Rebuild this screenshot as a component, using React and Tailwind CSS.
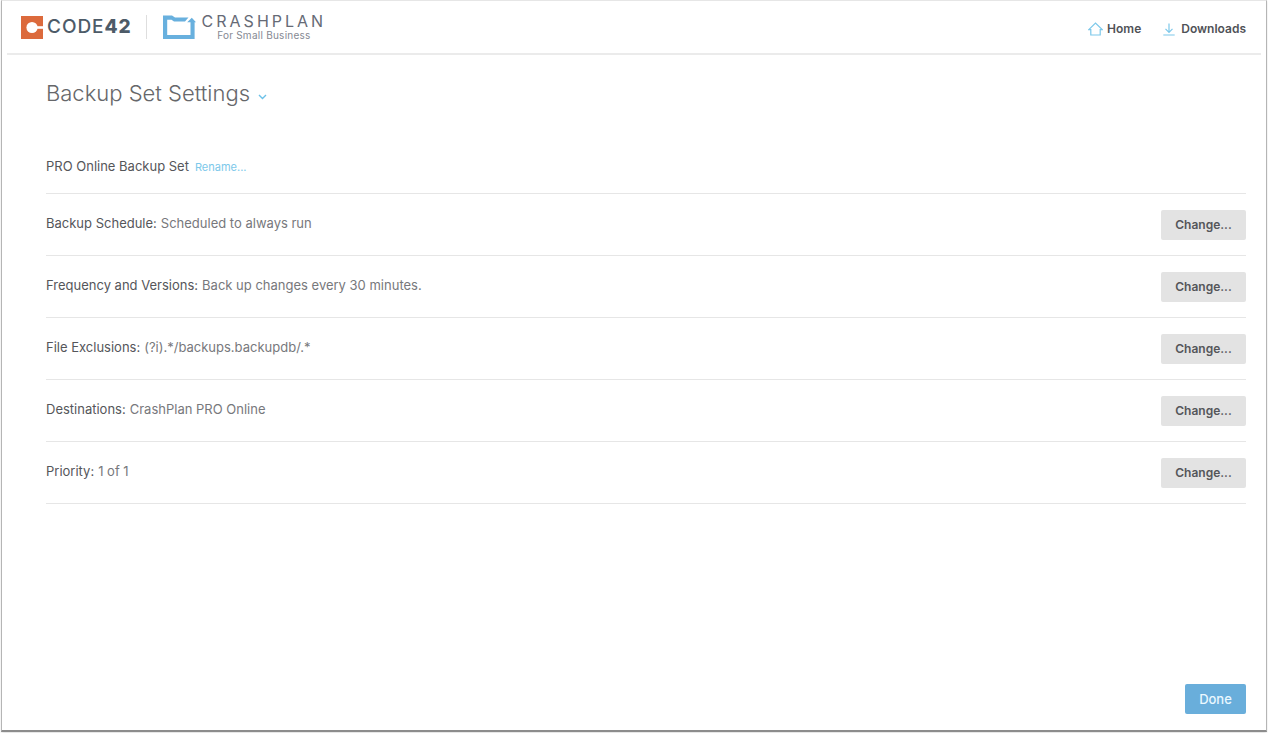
const settings = [
  { label: "Backup Schedule:", value: "Scheduled to always run" },
  { label: "Frequency and Versions:", value: "Back up changes every 30 minutes." },
  { label: "File Exclusions:", value: "(?i).*/backups.backupdb/.*" },
  { label: "Destinations:", value: "CrashPlan PRO Online" },
  { label: "Priority:", value: "1 of 1" },
];

function Code42Logo() {
  return (
    <div className="flex items-center gap-1">
      <svg width="22" height="23" viewBox="0 0 22 23" aria-hidden="true">
        <rect width="22" height="23" fill="#dc6a3c" />
        <circle cx="11" cy="11.5" r="5.6" fill="#fff" />
        <rect x="14" y="10.2" width="8" height="2.6" fill="#fff" />
      </svg>
      <span className="text-[19px] leading-6 font-medium tracking-wider text-[#4d5b68]">
        CODE<span className="font-extrabold">42</span>
      </span>
    </div>
  );
}

function CrashPlanLogo() {
  return (
    <div className="flex items-center gap-1.5">
      <svg width="33" height="25" viewBox="0 0 33 25" fill="#68b0de" aria-hidden="true">
        <path d="M0 0.5H9L12 2.5H25.5L22 6.5H11L8.5 4.8H4.2V20H27.5V7.3H24.2L28.8 2.8L33 7.3H31.6V24H0Z" />
      </svg>
      <div className="flex flex-col items-center">
        <span className="text-[16px] leading-4 tracking-[3px] text-[#666a76]">CRASHPLAN</span>
        <span className="text-[10px] leading-3 tracking-wide text-[#858993]">For Small Business</span>
      </div>
    </div>
  );
}

export default function App() {
  return (
    <div className="flex min-h-screen flex-col bg-white pr-px pb-px pl-px font-['Inter',sans-serif] text-[13px] leading-5 text-[#55565a]">
      <div className="flex grow flex-col border border-t-[#e6e6e6] border-r-[#b5b5b5] border-b-2 border-b-[#8c8c8c] border-l-[#b5b5b5] bg-white shadow-sm">
        <header className="mx-[5px] flex h-[54px] items-center justify-between border-b-2 border-[#ebebeb] pr-[15px] pl-[14px]">
          <div className="flex items-center">
            <Code42Logo />
            <div className="mr-4 ml-3.5 h-6 w-px bg-[#dedede]" />
            <CrashPlanLogo />
          </div>
          <nav className="flex items-center gap-[22px] pt-1 text-xs font-semibold text-[#505257]">
            <a href="#home" className="flex items-center gap-1">
              <svg width="15" height="14" viewBox="0 0 15 14" fill="none" stroke="#7cc8ea" strokeWidth="1.2" aria-hidden="true">
                <path d="M0.8 7.6L7.5 1L14.2 7.6H12.2V13H2.8V7.6Z" />
              </svg>
              Home
            </a>
            <a href="#downloads" className="flex items-center gap-1.5">
              <svg width="12" height="13" viewBox="0 0 12 13" fill="none" stroke="#7cc8ea" strokeWidth="1.2" aria-hidden="true">
                <path d="M6 0.5V9M2.5 5.8L6 9.3L9.5 5.8M0.3 12H11.7" />
              </svg>
              Downloads
            </a>
          </nav>
        </header>

        <main className="flex grow flex-col pr-5 pb-4 pl-11">
          <div className="flex items-center gap-2 pt-[22px]">
            <h1 className="text-[22px] leading-8 font-light text-[#66676a]">Backup Set Settings</h1>
            <button type="button" aria-label="Choose backup set" className="pt-2">
              <svg width="9" height="6" viewBox="0 0 9 6" fill="none" stroke="#6cc1e8" strokeWidth="1.4">
                <path d="M1 1L4.5 4.5L8 1" />
              </svg>
            </button>
          </div>

          <section className="pt-[47px]">
            <div className="flex items-baseline gap-1.5 border-b border-[#e6e6e6] pb-4">
              <h2 className="text-[13px] leading-5">PRO Online Backup Set</h2>
              <a href="#rename" className="text-[11px] text-[#7cc8ea]">Rename...</a>
            </div>
            <ul>
              {settings.map(({ label, value }) => (
                <li key={label} className="flex h-[62px] items-center justify-between border-b border-[#e6e6e6]">
                  <p className="flex gap-1 pb-1">
                    <span>{label}</span>
                    <span className="text-[#77787c]">{value}</span>
                  </p>
                  <button
                    type="button"
                    aria-label={"Change " + label}
                    className="h-[30px] w-[85px] rounded-xs bg-[#e3e3e3] text-xs font-semibold text-[#55565a]"
                  >
                    Change...
                  </button>
                </li>
              ))}
            </ul>
          </section>

          <button type="button" className="mt-auto h-[30px] w-[61px] self-end rounded-xs bg-[#69aedb] font-medium text-[#eaf8ff]">
            Done
          </button>
        </main>
      </div>
    </div>
  );
}
